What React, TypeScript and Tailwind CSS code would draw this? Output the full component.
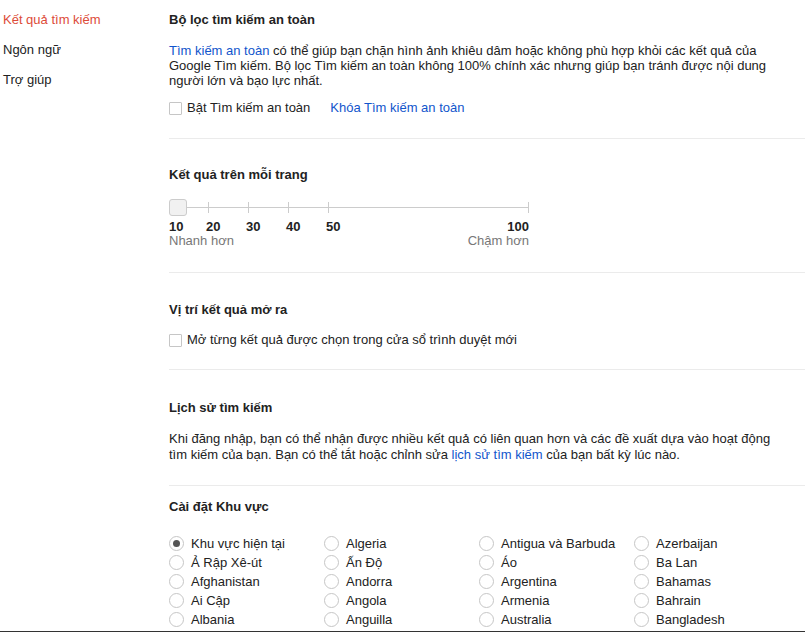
const regions = [
  ["Khu vực hiện tại", "Ả Rập Xê-út", "Afghanistan", "Ai Cập", "Albania"],
  ["Algeria", "Ấn Độ", "Andorra", "Angola", "Anguilla"],
  ["Antigua và Barbuda", "Áo", "Argentina", "Armenia", "Australia"],
  ["Azerbaijan", "Ba Lan", "Bahamas", "Bahrain", "Bangladesh"],
];

const ticks = [
  { label: "10", x: 0 },
  { label: "20", x: 39 },
  { label: "30", x: 79 },
  { label: "40", x: 119 },
  { label: "50", x: 159 },
];

function Checkbox() {
  return <span className="inline-block w-[13px] h-[13px] border border-[#c6c6c6] rounded-[1px] bg-white shrink-0" />;
}

function Radio({ checked }: { checked?: boolean }) {
  return (
    <span className="w-[15px] h-[15px] rounded-full border border-[#c6c6c6] bg-white flex items-center justify-center shrink-0">
      {checked && <span className="w-[7px] h-[7px] rounded-full bg-[#555]" />}
    </span>
  );
}

function Heading({ children }: { children: React.ReactNode }) {
  return <h2 className="font-bold text-[13px] leading-4 text-[#222]">{children}</h2>;
}

export default function App() {
  return (
    <div
      className="h-[632px] overflow-hidden border-b border-[#333] bg-white text-[13px] leading-4 text-[#222] flex"
      style={{ fontFamily: '"Liberation Sans", Arial, sans-serif' }}
    >
      <nav className="w-[169px] shrink-0 pl-[3px] pt-[12px] flex flex-col gap-[14px]">
        <a className="text-[#dd4b39]">Kết quả tìm kiếm</a>
        <a>Ngôn ngữ</a>
        <a>Trợ giúp</a>
      </nav>

      <main className="flex-1 pt-[12px]">
        {/* an toàn */}
        <section className="pb-[22px] border-b border-[#ebebeb]">
          <Heading>Bộ lọc tìm kiếm an toàn</Heading>
          <p className="mt-[15px] w-[600px] leading-[15px]">
            <a className="text-[#1155cc]">Tìm kiếm an toàn</a> có thể giúp bạn chặn hình ảnh khiêu dâm hoặc không phù hợp khỏi các kết quả của Google Tìm kiếm. Bộ lọc Tìm kiếm an toàn không 100% chính xác nhưng giúp bạn tránh được nội dung người lớn và bạo lực nhất.
          </p>
          <div className="mt-[12px] flex items-center">
            <Checkbox />
            <span className="ml-[5px]">Bật Tìm kiếm an toàn</span>
            <a className="ml-[20px] text-[#1155cc]">Khóa Tìm kiếm an toàn</a>
          </div>
        </section>

        {/* so ket qua */}
        <section className="pt-[28px] pb-[23px] border-b border-[#ebebeb]">
          <Heading>Kết quả trên mỗi trang</Heading>
          <div className="mt-[16px] w-[360px]">
            <div className="relative h-[17px]">
              <div className="absolute left-0 right-0 top-[8px] h-px bg-[#ccc]" />
              {ticks.slice(1).map((t) => (
                <div key={t.label} className="absolute top-[3px] w-px h-[11px] bg-[#ccc]" style={{ left: t.x }} />
              ))}
              <div className="absolute right-0 top-[3px] w-px h-[11px] bg-[#ccc]" />
              <div className="absolute left-0 top-0 w-[18px] h-[17px] rounded-[3px] border border-[#ccc] bg-[#f1f1f1]" />
            </div>
            <div className="relative h-4 mt-[3px] font-bold">
              {ticks.map((t) => (
                <span key={t.label} className="absolute top-0" style={{ left: t.x - (t.x ? 2 : 0) }}>
                  {t.label}
                </span>
              ))}
              <span className="absolute right-0 top-0">100</span>
            </div>
            <div className="flex justify-between text-[#777] mt-[-2px]">
              <span>Nhanh hơn</span>
              <span>Chậm hơn</span>
            </div>
          </div>
        </section>

        {/* vi tri */}
        <section className="pt-[29px] pb-[21px] border-b border-[#ebebeb]">
          <Heading>Vị trí kết quả mở ra</Heading>
          <div className="mt-[14px] flex items-center">
            <Checkbox />
            <span className="ml-[5px]">Mở từng kết quả được chọn trong cửa sổ trình duyệt mới</span>
          </div>
        </section>

        {/* lich su */}
        <section className="pt-[30px] pb-[22px] border-b border-[#ebebeb]">
          <Heading>Lịch sử tìm kiếm</Heading>
          <p className="mt-[15px] w-[610px]">
            Khi đăng nhập, bạn có thể nhận được nhiều kết quả có liên quan hơn và các đề xuất dựa vào hoạt động tìm kiếm của bạn. Bạn có thể tắt hoặc chỉnh sửa <a className="text-[#1155cc]">lịch sử tìm kiếm</a> của bạn bất kỳ lúc nào.
          </p>
        </section>

        {/* khu vuc */}
        <section className="pt-[13px]">
          <Heading>Cài đặt Khu vực</Heading>
          <div className="mt-[19px] flex">
            {regions.map((col, ci) => (
              <div key={ci} className="w-[155px] flex flex-col">
                {col.map((name, ri) => (
                  <label key={name} className="h-[19px] flex items-center">
                    <Radio checked={ci === 0 && ri === 0} />
                    <span className="ml-[7px]">{name}</span>
                  </label>
                ))}
              </div>
            ))}
          </div>
        </section>
      </main>
    </div>
  );
}
